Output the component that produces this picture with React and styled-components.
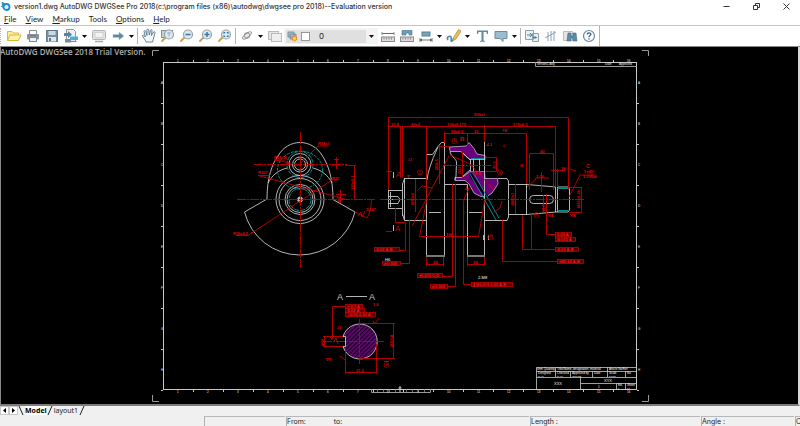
import React from "react";
import styled, { createGlobalStyle, css } from "styled-components";

const GlobalStyle = createGlobalStyle`
  * { box-sizing: border-box; }
  body { margin: 0; background: #f0f0f0; font-family: "Noto Sans", "Open Sans", sans-serif; color: #222; }
`;

const Window = styled.div`
  display: flex;
  flex-direction: column;
  height: 100vh;
  overflow: hidden;
`;
const TitleBar = styled.header`
  display: flex;
  align-items: center;
  height: 13px;
  padding-left: 1px;
  gap: 3px;
  background: #fff;
`;
const Title = styled.h1`
  flex: 1;
  margin: 0;
  font-size: 7px;
  line-height: 13px;
  font-family: Inter, sans-serif;
  font-weight: 500;
  color: #333;
  white-space: nowrap;
`;
const PlainButton = styled.button`
  display: flex;
  align-items: center;
  justify-content: center;
  padding: 0;
  border: 0;
  background: transparent;
  color: inherit;
  font: inherit;
`;
const WindowButton = styled(PlainButton)`
  width: 27px;
  height: 13px;
`;
const MenuBar = styled.nav`
  display: flex;
  align-items: center;
  height: 12px;
  padding-left: 4px;
  gap: 9px;
  background: #fff;
`;
const MenuItem = styled(PlainButton)`
  font-family: Lato, sans-serif;
  font-size: 8px;
  line-height: 12px;
  white-space: pre;
  u { text-underline-offset: 1px; }
`;
const Toolbar = styled.div`
  display: flex;
  align-items: center;
  height: 22px;
  border-top: 1px solid #c4c4c4;
  border-bottom: 1px solid #8a8a8a;
  background: #fff;
`;
const Grip = styled.span`
  width: 4px;
  height: 16px;
  border-left: 1px dotted #b0b0b0;
  flex: none;
`;
const ToolButton = styled(PlainButton)`
  flex: none;
  width: ${(p) => (p.$caret ? 9 : 19)}px;
  height: 19px;
`;
const Divider = styled.span`
  flex: none;
  width: 3px;
  height: ${(p) => (p.$full ? 20 : 16)}px;
  background: linear-gradient(to right, transparent 1px, #b4b4b4 1px, #b4b4b4 2px, transparent 2px);
`;
const LayerCombo = styled.label`
  display: flex;
  align-items: center;
  flex: none;
  width: 94px;
  height: 16px;
  padding: 2px;
  background: #f4f4f4;
`;
const LayerField = styled.span`
  display: flex;
  align-items: center;
  flex: 1;
  gap: 3px;
  height: 13px;
  padding-left: 1px;
  background: #e0e0e0;
`;
const Swatch = styled.span`
  width: 9px;
  height: 9px;
  border: 1px solid #999;
  background: #fff;
`;
const LayerSelect = styled.select`
  appearance: none;
  flex: 1;
  min-width: 0;
  border: 0;
  padding: 0 0 0 6px;
  background: transparent;
  font: 8px/11px Inter, sans-serif;
  color: #222;
`;
const ComboArrow = styled.span`
  display: flex;
  justify-content: center;
  width: 10px;
`;
const Viewport = styled.main`
  position: relative;
  flex: 1;
  min-height: 0;
  background: #000;
  border-left: 1px solid #8a8a8a;
  border-right: 2px solid #d8d8d8;
  border-bottom: 2px solid #7c7c7c;
  overflow: hidden;
`;
const Watermark = styled.p`
  position: absolute;
  top: 0;
  left: -1px;
  margin: 0;
  font: 600 8px/9px "Open Sans", sans-serif;
  color: #b0b0b0;
  white-space: nowrap;
`;
const Sheet = styled.svg`
  display: block;
  width: 100%;
  height: 100%;
  text { font-family: "Liberation Sans", sans-serif; }
`;
const TabStrip = styled.div`
  display: flex;
  align-items: stretch;
  height: 9px;
  background: #f0f0f0;
`;
const ScrollButton = styled(PlainButton)`
  width: 9px;
  border: 1px solid #c8c8c8;
  background: #fff;
`;
const Slash = styled.svg`
  width: 7px;
  height: 9px;
  flex: none;
`;
const SheetTab = styled(PlainButton)`
  font-size: 7px;
  line-height: 9px;
  ${(p) => p.$active && css`font-weight: 700; background: #fff; color: #000;`}
`;
const StatusBar = styled.footer`
  display: grid;
  grid-template-columns: 203px 81px 1fr 170px 93px 5px;
  column-gap: 1px;
  height: 11px;
  padding-top: 1px;
  background: #f0f0f0;
`;
const StatusCell = styled.div`
  display: flex;
  gap: 28px;
  overflow: hidden;
  font: 7px/9px Inter, sans-serif;
  white-space: nowrap;
  ${(p) => !p.$blank && css`border-top: 1px solid #b8b8b8; border-left: 1px solid #b0b0b0;`}
`;

const Caret = () => (
  <svg width="5" height="3" viewBox="0 0 5 3"><path d="M0 0H5L2.5 3Z" fill="#111" /></svg>
);

const Lens = ({ children }) => (
  <>
    <path d="M5.5 9.5L2 13" stroke="#c9a54c" strokeWidth="2" strokeLinecap="round" />
    <circle cx="9" cy="6.500" r="4.500" fill="#dbe8f0" stroke="#95a2ad" strokeWidth="1.200" />
    {children}
  </>
);
const Ruler = () => (
  <>
    <rect x="1.5" y="9" width="13" height="4.5" fill="#ddd" stroke="#8a8a8a" />
    <path d="M4 9.5v2M6.5 9.5v2M9 9.5v2M11.5 9.5v2" stroke="#777" strokeWidth=".8" />
  </>
);

const glyphs = {
  Open: (
    <>
      <path d="M1.5 12.5V3.5H6L7.5 5H12.5V7" fill="#fbeea2" stroke="#d9b83e" />
      <path d="M1.5 12.5L4 7H15L12.5 12.5Z" fill="#fff3a8" stroke="#d9b83e" />
    </>
  ),
  Print: (
    <>
      <path d="M4.5 6V2.5h7V6" fill="#fff" stroke="#8a8a8a" />
      <rect x="2" y="6" width="12" height="5.5" rx="1" fill="#89949c" />
      <rect x="4.5" y="9.5" width="7" height="4" fill="#e8f2f8" stroke="#7d8991" />
      <path d="M5 7.5h6" stroke="#3d8ab5" />
    </>
  ),
  Save: (
    <>
      <path d="M2.5 2.5h11v11h-11z" fill="#7892a3" stroke="#60798a" />
      <rect x="4.5" y="3" width="7" height="4" fill="#c9d9e1" />
      <rect x="4" y="9" width="8" height="4.5" fill="#dfe6ea" />
      <rect x="5" y="10" width="2" height="3" fill="#60798a" />
    </>
  ),
  Convert: (
    <>
      <path d="M3.500 1.500h7l2 2v10h-9z" fill="#eef1f3" stroke="#8d999f" />
      <path d="M1 5h4V3l4 3.500L5 10V8H1z" fill="#57859f" />
      <rect x="2" y="11" width="6" height="3.500" fill="#7d8a92" />
      <rect x="7" y="8.500" width="8" height="3.500" fill="#4caee0" />
      <path d="M7.500 13.500h6" stroke="#7b868d" />
    </>
  ),
  Monitor: (
    <>
      <rect x="1.500" y="2.500" width="13" height="9" rx="1" fill="#e2e2e2" stroke="#b2b2b2" />
      <rect x="4" y="4.500" width="8" height="5" fill="#f3f3f3" stroke="#c6c6c6" strokeWidth=".7" />
      <path d="M4 13.500h8" stroke="#aaa" strokeWidth="1.500" />
    </>
  ),
  Next: <path d="M3 6.500h6V4L14 8L9 12V9.500H3z" fill="#5e88a3" stroke="#b8cbd6" strokeWidth=".6" />,
  Pan: (
    <path
      d="M5 14C4.500 11.500 1.500 9 1.500 7.500C2 6.500 3.500 7.500 4.300 9L3 3.500C3 2.300 4.300 2.300 4.700 3.500L6 7.500L5.900 2C6 .900 7.500 .900 7.700 2L8.300 7L9.500 2.200C10 1.200 11.200 1.500 11 2.800L10.400 7.500L12.500 4C13.200 3.200 14.400 3.800 14 5C13 8 12.800 10 11.500 14Z"
      fill="#f4f8fa" stroke="#55768b" strokeWidth=".9" strokeLinejoin="round"
    />
  ),
  "Zoom window": (
    <>
      <rect x="1.500" y="2.500" width="11" height="7" fill="#c9cdd0" stroke="#8b9095" />
      <Lens><path d="M7 5h4M9 4.500v4" stroke="#8aa3b3" strokeWidth=".8" /></Lens>
    </>
  ),
  "Zoom out": <Lens><path d="M6.500 6.500h5" stroke="#35799f" strokeWidth="1.500" /></Lens>,
  "Zoom in": <Lens><path d="M6.500 6.500h5M9 4v5" stroke="#35799f" strokeWidth="1.500" /></Lens>,
  "Zoom extents": (
    <Lens><path d="M7 5.700V4.500h1.200M9.800 4.500H11v1.200M11 7.300V8.500H9.800M8.200 8.500H7V7.300" fill="none" stroke="#35799f" strokeWidth="1.200" /></Lens>
  ),
  Orbit: (
    <g fill="none" stroke="#8a8a8a" strokeWidth=".9">
      <circle cx="8" cy="7.500" r="2.800" fill="#e6e6e6" />
      <ellipse cx="8" cy="7.500" rx="5.500" ry="2" transform="rotate(-38 8 7.500)" />
    </g>
  ),
  Layers: (
    <>
      <rect x="1.500" y="3.500" width="10" height="8" fill="#e4e4e4" stroke="#bbb" />
      <rect x="4.500" y="5.500" width="10" height="8" fill="#eee" stroke="#bbb" />
    </>
  ),
  Distance: <><path d="M2 5.500h12" stroke="#3e7696" /><path d="M2 4v3M14 4v3" stroke="#3e7696" strokeWidth=".7" /><Ruler /></>,
  Area: <><path d="M3 7V2.500H13V7H10V5H7V7Z" fill="#6f9cb8" stroke="#537d97" strokeWidth=".7" /><Ruler /></>,
  Dimension: (
    <>
      <rect x="4" y="4" width="8" height="4" fill="#7da2b8" stroke="#55819c" />
      <path d="M2 10v4M14 10v4M2 12h12" stroke="#777" />
      <path d="M2 12l2-1.500v3zM14 12l-2-1.500v3z" fill="#555" />
    </>
  ),
  Draw: (
    <>
      <path d="M2 12C0 9 4 7 5 9S4 14 6 13S7 10 8 11" fill="none" stroke="#4d88ad" strokeWidth="1.600" />
      <path d="M7.500 9.500L12.500 1.500L15 3L10 11L7 12.500Z" fill="#f0bb56" stroke="#b48336" strokeWidth=".7" />
    </>
  ),
  Text: <path d="M3 2.500H14V6H13L12.400 4H9.500V12.600L11 13V13.800H6V13L7.500 12.600V4H4.600L4 6H3Z" fill="#5f88a3" />,
  Comment: <path d="M2 3.500H14V10.500H10V13.500L7 10.500H2Z" fill="#9bbccd" stroke="#698c9f" />,
  Compare: (
    <>
      <path d="M1.500 2.500h8v9h-8zM8.500 5.500h6v8h-6z" fill="#e9eff2" stroke="#8fa0aa" />
      <path d="M3 7h5M6 5l2 2l-2 2M9 9.500h4M11 8v3" fill="none" stroke="#4387ab" />
    </>
  ),
  Overlap: <path d="M5 4v9M8 3v10M11 3v10M2 10L13 4" stroke="#8aa1af" />,
  Find: (
    <>
      <path d="M1.500 3.500h9v9h-9z" fill="#e5e5e5" stroke="#bbb" />
      <path d="M6 5h3v3h2V5h3l1 8h-4v-3H9v3H5z" fill="#5e8ba8" stroke="#3e6c8b" strokeWidth=".6" />
    </>
  ),
  Help: (
    <>
      <circle cx="8" cy="8" r="5.500" fill="#fff" stroke="#6886a0" strokeWidth="1.200" />
      <path d="M6.200 6.500C6.200 4.300 9.900 4.300 9.900 6.300C9.900 7.500 8 7.600 8 9.200M8 10.200V11.500" fill="none" stroke="#3d617a" strokeWidth="1.300" />
    </>
  ),
};

const Tool = ({ name }) => (
  <ToolButton aria-label={name} title={name}>
    <svg width="16" height="16" viewBox="0 0 16 16">{glyphs[name]}</svg>
  </ToolButton>
);
const Drop = ({ label }) => <ToolButton $caret aria-label={label}><Caret /></ToolButton>;

const WHITE = "#c8c8c8";
const RED = "#c40000";
const CYAN = "#009c9c";

const Note = ({ x, y, size = 4, color, turn, children }) => (
  <text
    x={x} y={y} fontSize={size} fill={color || "#e80000"} fontWeight={color ? 400 : 700}
    transform={turn ? `rotate(-90 ${x} ${y})` : undefined}
  >
    {children}
  </text>
);
const Tolerance = ({ x, y, w, children }) => (
  <g>
    <rect x={x + 0.5} y={y + 0.5} width={w} height="4" fill="#520000" stroke={RED} strokeWidth=".8" />
    <text x={x + 2} y={y + 4} fontSize="4" fontWeight="700" fill="#ff1a1a">{children}</text>
  </g>
);
const Datum = ({ x, y, label }) => (
  <g>
    <circle cx={x} cy={y} r="2.5" fill="none" stroke={RED} strokeWidth=".7" />
    <text x={x} y={y + 1} fontSize="3" fill="#f00000" textAnchor="middle">{label}</text>
  </g>
);

const columns = Array.from({ length: 31 }, (_, i) => 178 + i * 15);
const rows = ["A", "B", "C", "D", "E", "F", "G", "H"];

const Frame = () => (
  <g stroke={WHITE} fill="none">
    <rect x="163.500" y="62.500" width="473" height="327" />
    <g stroke="#999">
      <path d="M152.500 56V50.500H159M642 50.500H648.500V56M152.500 395V401.500H159M642 401.500H648.500V395" />
      <path d="M535.500 62V66.500H637M371.500 389V392.500H430.500V389" />
      <path d="M377.500 389v3M383.500 389v3M389.500 389v3M395.500 389v3M406.500 389v3M412.500 389v3M418.500 389v3M424.500 389v3" strokeWidth=".7" />
    </g>
    <path d="M400 386v6M398.500 388h3" />
    {columns.map((x, i) => i % 2 ? (
      <path key={x} d={`M${x}.500 60v2M${x}.500 390v2`} />
    ) : (
      <g key={x} stroke="none">
        <Note x={x - 1} y={62} size={3} color="#eee">{i / 2 + 1}</Note>
        <Note x={x - 1} y={393} size={3} color="#eee">{i / 2 + 1}</Note>
      </g>
    ))}
    {rows.map((r, i) => (
      <g key={r}>
        <path d={`M161 ${103.500 + i * 41}h2M637 ${103.500 + i * 41}h2`} />
        <g stroke="none">
          <Note x={161} y={84 + i * 41} size={3} color="#eee">{r}</Note>
          <Note x={638} y={84 + i * 41} size={3} color="#eee">{r}</Note>
        </g>
      </g>
    ))}
    <g stroke="none">
      <Note x={537} y={65} size={3} color="#eee">version1.dwg</Note>
      <Note x={605} y={65} size={3} color="#eee">Date</Note>
      <Note x={619} y={65} size={3} color="#eee">Approved</Note>
    </g>
  </g>
);

const blockTexts = [
  [537, 370, 3, "Item Quantity"], [557, 370, 3, "Title/Name, designation, material"], [609, 370, 3, "Article No/Ref"],
  [538, 374, 3, "Designed"], [538, 377, 2, "by xxx"],
  [557, 374, 3, "Checked"], [557, 377, 2, "by xxx"],
  [572, 374, 3, "Approved by"], [572, 377, 2, "name date"],
  [594, 374, 3, "Date"], [609, 374, 3, "Scale"], [609, 377, 2, "1:1 mm"], [627, 374, 3, "No"],
  [598, 388, 3, "1"], [618, 386, 3, "Ed."], [618, 389, 2, "0"], [627, 386, 3, "Sheet"], [627, 389, 2, "1/1"],
];

const TitleBlock = () => (
  <g>
    <path
      d="M536.500 389V367.500H637M536.500 371.500H637M536.500 377.500H637M555.500 367v10M570.500 371v6M592.500 371v6M607.500 367v10M580.500 377v12M625.500 371v6M580.500 383.500H637M616.500 383v6M625.500 383v6"
      fill="none" stroke={WHITE} strokeWidth=".8"
    />
    {blockTexts.map(([x, y, size, t]) => (
      <Note key={`${x}-${y}`} x={x} y={y} size={size} color="#fff">{t}</Note>
    ))}
    <Note x={554} y={385} color="#eee">XXX</Note>
    <Note x={604} y={382} color="#eee">XYX</Note>
  </g>
);

const FrontView = () => (
  <g fill="none" strokeWidth=".9">
    <g stroke={WHITE}>
      <path d="M267 199L244.500 212A57 57 0 0 0 355 212L333 199.500" />
      <path d="M267 199C267 178 272 164 278 156C288 138 312 138 322.500 156C329 166 333 180 333 199.500" />
      <path d="M268 183C272 175 279 170 287 168M332 183C328 175 321 170 313 168" />
      <circle cx="300" cy="199.500" r="24" /><circle cx="300" cy="199.500" r="21" />
      <circle cx="300" cy="199.500" r="15" /><circle cx="300" cy="199.500" r="13" />
      <circle cx="300" cy="199.500" r="2.500" fill="#aaa" />
      <circle cx="300" cy="164.500" r="11" /><circle cx="300" cy="164.500" r="7.500" /><circle cx="300" cy="164.500" r="5.500" />
    </g>
    <g stroke={CYAN}>
      <circle cx="300" cy="199.500" r="11" strokeDasharray="5 1" />
      <circle cx="300" cy="164.500" r="13" strokeDasharray="4 1" />
      <ellipse cx="300" cy="170" rx="22.500" ry="19" strokeDasharray="3 1" />
    </g>
    <g stroke={RED}>
      <path d="M300.500 132V267M237 199.500H375M254 164.500H347" strokeDasharray="9 1 2 1" />
      <path d="M251 233.500L332 180M258 175.500L345 199M275 160L300 165M300 164L318 146H328M274 160H286M258 175.500H270M345 165.500H356M354.500 165V199M340.500 190V203M336 194.500H346M336.500 157V169M334 159.500H339M331 180H337M236 235.500H249L252 232" />
      <path d="M371.500 199C371.500 206 370 213 367 218L355 212M358 216L361 212L362 217L365 211" />
    </g>
    <Note x={318} y={145}>R28±3</Note><Note x={274} y={159}>R34.36</Note><Note x={258} y={174}>R107</Note>
    <Note x={332} y={180}>R30</Note><Note x={233} y={235}>R96±0.5</Note><Note x={366} y={211}>30.87</Note>
    <Note x={354} y={190} turn>120±0.1</Note><Note x={340} y={202} turn>8.5</Note>
  </g>
);

const SideView = () => (
  <g fill="none" strokeWidth=".9">
    <path
      d="M449.500 147L466.500 146L469 142.500L474 148.500L477 154L485 155.500V159.500H470L466 156.500L461 151.500H450Z M455 177.500H462L470 171.500H484.500L485 178.500H497.500L498 184L492 193L487 196.500H481L474 193L469 184L465 180.500H455Z"
      fill="url(#hatch)" stroke="#b9a0c0"
    />
    <path d="M470 174L487 197" stroke="#000" strokeWidth="3" />
    <g stroke={WHITE}>
      <path d="M388.500 190.500H402M388.500 208.500H402M388.500 190V209M390.500 192V207M388 196.500H398L400 199.500L398 203.500H388M402.500 184V216M404.500 178V220" />
      <path d="M402.500 184L404.500 178.500H426.500M402.500 214L404.500 220.500H426.500" />
      <path d="M426.500 256V154.500H432.500L438 146.500L441.500 142.500H444.500V256M427 180C428 172 431 162 438 147M444.500 184.500H467.500V256M484.500 256V171" />
      <path d="M426 256H445M467 256H485" stroke="#777" strokeWidth="2" />
      <path d="M429 212.500H441M469 212.500H482M450 152C452 158 457 159 456.500 163L456 176L455 180" />
      <path d="M470.500 159V171M473.500 159V171M479.500 159V171M484.500 142V171M462 152L470 160M462 177L470 170" />
      <path d="M498 178.500H507L508.500 181V217L507 220.500H485M508.500 184.500H527M508.500 214.500H527M526.500 184V215M527 184.500L556 187M527 214.500L556 212M555.500 187V212M557.500 187H568L569.500 189V210L568 212H556M557.500 187V212" />
      <rect x="529.500" y="195.500" width="24" height="8" rx="4" />
      <path d="M393.500 172V178M393.500 225V231M483.500 235V240M488.500 235V240M386 199.500H402" />
    </g>
    <path d="M470 174L496 220M473 172L499 218M557 188.500H568M557 210.500H568M471 158.500H484M471 171.500H484" stroke={CYAN} />
    <g stroke={RED}>
      <path d="M380 199.500H584M443 165.500H492" strokeDasharray="9 1 2 1" />
      <path d="M388.500 190V117.500H568.500V190M388.500 126.500H555.500V187M402.500 126V178M400.500 127V178M426.500 126V200M484.500 126V142M444.500 143V133.500H526.500V184M467.500 133V146M529.500 190V153.500H553.500V190M551 170.500H565M557.500 169V186" />
      <path d="M388.500 125V128M484.500 125V128M444.500 132V135M484.500 132V135M439.500 147V184M439 146.500H450M462.500 152V178M452.500 184V276.500H442M455.500 184V286.500H447M463.500 202V284.500H471M463 202L469 188" />
      <path d="M395.500 208V222.500H405.500V250.500H399M409.500 220V263.500H400M419.500 236.500H478.500L485 199M419.500 236.500L427 199M412 226L449 156M415.500 179V212M386 171.500H392M386 231.500H392M418 190L422 186L432 188" />
      <path d="M426.500 257V266M443.500 257V266M426.500 264.500H443.500M467.500 257V266M484.500 257V266M467.500 264.500H484.500" />
      <path d="M515.500 184V214M546.500 194V234.500H555M522.500 215V249.500H555M531.500 214V249.500M502.500 220V261.500H557M485 157.500H496.500V171.500H485M541.500 172V192M535 178H549M527 187L536 179M543.500 195V212M569 187.500H582M569 212.500H582M581.500 187V212M569 197L580 175H595M567 168L576 171M494 212L500 208L502 201M450 155L470 164L494 190" />
    </g>
    <Note x={474} y={116}>500±1</Note><Note x={391} y={126}>20.8</Note><Note x={411} y={126}>40±2</Note>
    <Note x={447} y={126}>100±0.175</Note><Note x={513} y={126}>170±0.3</Note><Note x={451} y={133}>58±0.5</Note>
    <Note x={474} y={133}>31</Note><Note x={502} y={132}>74°</Note><Note x={540} y={153}>40</Note>
    <Note x={561} y={170}>18</Note><Note x={586} y={168} size={5}>C</Note><Note x={584} y={173}>1×45°</Note><Note x={583} y={178}>3.2/Ra6</Note>
    <Note x={438} y={170} turn>Ø68.5</Note><Note x={414} y={205} turn>Ø70k6</Note><Note x={461} y={174} turn>Ø22</Note>
    <Note x={514} y={205} turn>Ø60h7</Note><Note x={580} y={208} turn>M36×2-6h</Note><Note x={496} y={169} turn>25.5</Note><Note x={545} y={212} turn>12.5</Note>
    <Note x={446} y={236}>180</Note><Note x={433} y={264}>28</Note><Note x={473} y={264}>28</Note>
    <Note x={407} y={161}>⊥1</Note><Note x={407} y={178}>∇</Note><Note x={460} y={141} size={6}>R</Note><Note x={486} y={146}>∠1</Note>
    <Note x={502} y={147}>⊥</Note><Note x={520} y={167}>Ø</Note><Note x={536} y={178}>1:10</Note><Note x={548} y={217}>∇A</Note><Note x={570} y={217}>∇B</Note>
    <Note x={474} y={175} size={5}>0.8</Note><Note x={465} y={190} size={5}>∆</Note>
    <Note x={396} y={177} size={8} color={RED}>A</Note><Note x={395} y={231} size={8} color={RED}>A</Note>
    <Datum x={454.500} y={141} label="B" /><Datum x={420} y={172.500} label="D" /><Datum x={500} y={172.500} label="E" />
    <Datum x={490.500} y={237} label="F" /><Datum x={536.500} y={215} label="G" />
    <Note x={385} y={261} color="#fff">H6</Note><Note x={478} y={279} color="#fff">2-M8</Note>
    <Tolerance x={374} y={247} w={25}>∕0.02 A-B</Tolerance>
    <Tolerance x={382} y={261} w={18}>⌀ 0.005</Tolerance>
    <Tolerance x={417} y={273} w={25}>⌖0.015 C-D</Tolerance>
    <Tolerance x={430} y={284} w={17}>⌀ 0.005</Tolerance>
    <Tolerance x={471} y={282} w={41}>∥ Ø0.015 0.02 A-B</Tolerance>
    <Tolerance x={555} y={232} w={16}>0.03 A</Tolerance>
    <Tolerance x={555} y={237} w={20}>∕0.015 A</Tolerance>
    <Tolerance x={555} y={247} w={23}>∕0.03 A-B</Tolerance>
    <Tolerance x={557} y={259} w={26}>⌖Ø0.02 A-B</Tolerance>
  </g>
);

const SectionView = () => (
  <g fill="none" strokeWidth=".9">
    <path d="M345.500 336.500H343A17.500 17.500 0 1 1 343 346.500H345.500Z" fill="url(#section)" stroke={WHITE} />
    <Note x={337} y={300} size={9} color={WHITE}>A</Note>
    <path d="M346 296.500H367" stroke={WHITE} />
    <Note x={369} y={300} size={9} color={WHITE}>A</Note>
    <g stroke={RED}>
      <path d="M323 341.500H384M359.500 319V364" strokeDasharray="9 1 2 1" />
      <path d="M345 306.500H332.500V336M324.500 336V347M323 336.500H343M323 346.500H343M345.500 348V374M376.500 344V374M345.500 372.500H376.500M360 323.500H395M360 358.500H395M393.500 323V359" />
      <path d="M373 321L375 324L379 318M334 342L336 338L338 344M340 356L345 360M330 336L332 340L333 335M384 361.500H389" />
    </g>
    <Tolerance x={345} y={304} w={17}>= 0.1 A</Tolerance>
    <Tolerance x={345} y={308} w={19}>∕0.02 A</Tolerance>
    <Tolerance x={345} y={312} w={30}>⊥0.02-0.03 A</Tolerance>
    <Note x={336} y={329}>⊥1</Note><Note x={326} y={361}>∇1</Note><Note x={373} y={306}>1.6</Note>
    <Note x={324} y={346} turn>8N9</Note><Note x={393} y={347} turn>Ø35h8</Note><Note x={356} y={372}>31.5</Note>
    <Datum x={386.500} y={365} label="H" />
  </g>
);

const menus = [["F", "ile"], ["V", "iew"], ["M", "arkup"], ["", "Tools"], ["O", "ptions"], ["H", "elp"]];

export default function App() {
  return (
    <Window>
      <GlobalStyle />
      <TitleBar>
        <svg width="10" height="11" viewBox="0 0 10 11">
          <circle cx="5.500" cy="6" r="3" fill="#e6f6ff" stroke="#1b8fd0" strokeWidth="1.800" />
          <path d="M1 1.500L5 3L2 6ZM0 5L3 7" fill="#1b8fd0" stroke="#1b8fd0" />
        </svg>
        <Title>version1.dwg AutoDWG DWGSee Pro 2018(c:\program files (x86)\autodwg\dwgsee pro 2018)--Evaluation version</Title>
        <WindowButton aria-label="Minimize"><svg width="7" height="7"><path d="M.5 3.500h6" stroke="#333" /></svg></WindowButton>
        <WindowButton aria-label="Restore"><svg width="7" height="7"><path d="M2.500 2V.500h4v4H5M.500 2.500h4v4h-4z" fill="none" stroke="#333" /></svg></WindowButton>
        <WindowButton aria-label="Close"><svg width="7" height="7"><path d="M.500.500l6 6M6.500.500l-6 6" stroke="#333" /></svg></WindowButton>
      </TitleBar>
      <MenuBar>
        {menus.map(([key, rest]) => <MenuItem key={rest}>{key && <u>{key}</u>}{rest}</MenuItem>)}
      </MenuBar>
      <Toolbar role="toolbar">
        <Grip />
        <Tool name="Open" /><Tool name="Print" /><Tool name="Save" /><Tool name="Convert" /><Drop label="Convert options" />
        <Tool name="Monitor" /><Tool name="Next" /><Drop label="Next options" />
        <Divider />
        <Tool name="Pan" /><Tool name="Zoom window" /><Tool name="Zoom out" /><Tool name="Zoom in" /><Tool name="Zoom extents" />
        <Divider />
        <Tool name="Orbit" /><Drop label="Orbit options" /><Tool name="Layers" />
        <LayerCombo>
          <LayerField>
            <svg width="11" height="11" viewBox="0 0 11 11">
              <path d="M1 1h6v5H1zM3 3h6v5H3z" fill="#a9bcc8" stroke="#71899a" strokeWidth=".8" />
              <circle cx="7.500" cy="7.500" r="2.200" fill="#ffd35c" stroke="#ef8a22" strokeWidth="1.400" strokeDasharray="1.500 .6" />
            </svg>
            <Swatch />
            <LayerSelect aria-label="Layer" defaultValue="0"><option>0</option></LayerSelect>
          </LayerField>
          <ComboArrow><Caret /></ComboArrow>
        </LayerCombo>
        <Tool name="Distance" /><Tool name="Area" /><Tool name="Dimension" /><Drop label="Dimension options" />
        <Tool name="Draw" /><Drop label="Draw options" /><Tool name="Text" /><Tool name="Comment" /><Drop label="Comment options" />
        <Divider />
        <Tool name="Compare" /><Tool name="Overlap" /><Tool name="Find" /><Tool name="Help" />
        <Divider $full />
      </Toolbar>
      <Viewport>
        <Sheet viewBox="1 47 797 357" role="img" aria-label="Crankshaft drawing">
          <defs>
            <pattern id="hatch" width="2" height="2" patternUnits="userSpaceOnUse" patternTransform="rotate(-45)">
              <rect width="2" height="2" fill="#260030" /><path d="M0 1H2" stroke="#b000c8" strokeWidth="1" />
            </pattern>
            <pattern id="section" width="4" height="3" patternUnits="userSpaceOnUse" patternTransform="rotate(-45)">
              <rect width="4" height="3" fill="#180020" /><path d="M0 1H4" stroke="#9c10ac" strokeWidth="1" />
            </pattern>
          </defs>
          <Frame />
          <TitleBlock />
          <FrontView />
          <SideView />
          <SectionView />
        </Sheet>
        <Watermark>AutoDWG DWGSee 2018 Trial Version.</Watermark>
      </Viewport>
      <TabStrip>
        <ScrollButton aria-label="Previous sheet"><svg width="3" height="5"><path d="M3 0V5L0 2.500Z" /></svg></ScrollButton>
        <ScrollButton aria-label="Next sheet"><svg width="3" height="5"><path d="M0 0V5L3 2.500Z" /></svg></ScrollButton>
        <Slash><path d="M1 0L5 9" stroke="#222" /></Slash>
        <SheetTab $active>Model</SheetTab>
        <Slash><path d="M5 0L1 9" stroke="#222" /></Slash>
        <SheetTab>layout1</SheetTab>
        <Slash><path d="M6 0L2 9" stroke="#222" /></Slash>
      </TabStrip>
      <StatusBar>
        <StatusCell $blank />
        <StatusCell />
        <StatusCell><span>From:</span><span>to:</span></StatusCell>
        <StatusCell>Length :</StatusCell>
        <StatusCell>Angle :</StatusCell>
        <StatusCell>C</StatusCell>
      </StatusBar>
    </Window>
  );
}
